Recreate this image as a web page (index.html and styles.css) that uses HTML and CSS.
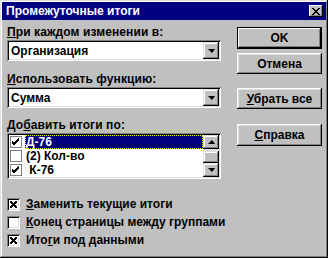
FILE: index.html
```html
<!DOCTYPE html>
<html lang="ru">
<head>
  <meta charset="UTF-8" />
  <title>Промежуточные итоги</title>
  <link rel="stylesheet" href="styles.css">
</head>
<body>

  <div class="window" role="dialog" aria-labelledby="dlgTitle">
    <div class="title-bar">
      <span id="dlgTitle" class="title-text">Промежуточные итоги</span>
      <button class="close-btn" aria-label="Закрыть">
        <svg width="8" height="7" viewBox="0 0 8 7"><path d="M0 0h2v1h1v1h2V1h1V0h2v1H7v1H6v1H5v1h1v1h1v1h1v1H6V6H5V5H3v1H2v1H0V6h1V5h1V4h1V3H2V2H1V1H0z" fill="#000"/></svg>
      </button>
    </div>

    <div class="content">
      <div class="left-col">
        <label class="field-label"><u>П</u>ри каждом изменении в:</label>
        <div class="combo">
          <span class="combo-value">Организация</span>
          <span class="combo-btn"><span class="arrow-down"></span></span>
        </div>

        <label class="field-label second"><u>И</u>спользовать функцию:</label>
        <div class="combo">
          <span class="combo-value">Сумма</span>
          <span class="combo-btn"><span class="arrow-down"></span></span>
        </div>

        <label class="field-label third">До<u>б</u>авить итоги по:</label>
        <div class="listbox">
          <div class="list-items">
            <div class="list-row">
              <span class="list-check checked"></span>
              <span class="list-text selected">Д-76</span>
            </div>
            <div class="list-row">
              <span class="list-check"></span>
              <span class="list-text">(2) Кол-во</span>
            </div>
            <div class="list-row">
              <span class="list-check checked"></span>
              <span class="list-text">&nbsp;К-76</span>
            </div>
          </div>
          <div class="scrollbar">
            <span class="scroll-btn"><span class="arrow-up"></span></span>
            <span class="scroll-track"></span>
            <span class="scroll-thumb"></span>
            <span class="scroll-fill"></span>
            <span class="scroll-btn"><span class="arrow-down"></span></span>
          </div>
        </div>
      </div>

      <div class="right-col">
        <button class="btn default">OK</button>
        <button class="btn cancel">Отмена</button>
        <button class="btn remove"><u>У</u>брать все</button>
        <button class="btn help"><u>С</u>правка</button>
      </div>
    </div>

    <div class="options">
      <div class="option">
        <span class="checkbox crossed"></span>
        <span><u>З</u>аменить текущие итоги</span>
      </div>
      <div class="option">
        <span class="checkbox"></span>
        <span><u>К</u>онец страницы между группами</span>
      </div>
      <div class="option">
        <span class="checkbox crossed"></span>
        <span>Ито<u>г</u>и под данными</span>
      </div>
    </div>
  </div>

</body>
</html>
```

FILE: styles.css
```css
body {
  margin: 0;
  padding: 0;
  background-color: #c0c0c0;
  font-family: 'Liberation Sans', Arial, sans-serif;
  font-size: 11px;
  font-weight: bold;
  color: #000;
}

u {
  text-decoration-thickness: 1px;
  text-underline-offset: 1px;
}

.window {
  width: 328px;
  height: 258px;
  box-sizing: border-box;
  padding: 2px;
  background-color: #c0c0c0;
  box-shadow: inset -1px -1px #000, inset 1px 1px #dfdfdf, inset -2px -2px #808080, inset 2px 2px #fff;
}

.title-bar {
  height: 18px;
  background-color: #000080;
  display: flex;
  align-items: center;
  justify-content: space-between;
  padding: 0 3px 0 4px;
}

.title-text {
  color: #fff;
  font-size: 12px;
}

.close-btn {
  width: 14px;
  height: 12px;
  padding: 0;
  border: none;
  background-color: #c0c0c0;
  display: flex;
  align-items: center;
  justify-content: center;
  box-shadow: inset -1px -1px #000, inset 1px 1px #fff, inset -2px -2px #808080;
}

.content {
  display: flex;
  padding: 5px 0 0 5px;
}

.left-col {
  width: 214px;
  display: flex;
  flex-direction: column;
}

.field-label {
  display: block;
  height: 14px;
  line-height: 14px;
  font-size: 12px;
  letter-spacing: 0.1px;
}
.field-label.second { margin-top: 11px; }
.field-label.third { margin-top: 10px; }

.combo {
  margin-top: 1px;
  height: 21px;
  box-sizing: border-box;
  background-color: #fff;
  display: flex;
  align-items: center;
  padding: 2px;
  box-shadow: inset 1px 1px #808080, inset -1px -1px #fff, inset 2px 2px #000, inset -2px -2px #dfdfdf;
}

.combo-value {
  flex: 1;
  padding-left: 2px;
  font-size: 12px;
}

.combo-btn, .scroll-btn {
  width: 16px;
  height: 17px;
  box-sizing: border-box;
  background-color: #c0c0c0;
  display: flex;
  align-items: center;
  justify-content: center;
  box-shadow: inset -1px -1px #000, inset 1px 1px #dfdfdf, inset -2px -2px #808080, inset 2px 2px #fff;
}

.arrow-down, .arrow-up {
  width: 0;
  height: 0;
  border-left: 4px solid transparent;
  border-right: 3px solid transparent;
}
.arrow-down { border-top: 4px solid #000; }
.arrow-up { border-bottom: 4px solid #000; }

.listbox {
  margin-top: 1px;
  height: 46px;
  box-sizing: border-box;
  padding: 2px;
  background-color: #fff;
  display: flex;
  box-shadow: inset 1px 1px #808080, inset -1px -1px #fff, inset 2px 2px #000, inset -2px -2px #dfdfdf;
}

.list-items {
  flex: 1;
}

.list-row {
  height: 14px;
  display: flex;
  align-items: center;
  font-size: 12px;
}

.list-check {
  width: 12px;
  height: 12px;
  box-sizing: border-box;
  margin: 0 3px 0 1px;
  border: 1px solid #808080;
  background-color: #fff;
}
.list-check.checked {
  background: #fff url("data:image/svg+xml,%3csvg xmlns='http://www.w3.org/2000/svg' width='10' height='10'%3e%3cpath d='M1 4l2 2 5-5M1 5l2 2 5-5M1 6l2 2 5-5' stroke='%23000' fill='none' stroke-width='1'/%3e%3c/svg%3e") no-repeat center;
}

.list-text {
  flex: 1;
  height: 14px;
  line-height: 14px;
  padding-left: 1px;
}
.list-text.selected {
  background-color: #000080;
  color: #fff;
  outline: 1px dotted #ffff00;
  outline-offset: -1px;
}

.scrollbar {
  width: 16px;
  display: flex;
  flex-direction: column;
}
.scrollbar .scroll-btn { height: 14px; }

.scroll-track {
  height: 2px;
  background-image: repeating-conic-gradient(#c0c0c0 0 25%, #fff 0 50%);
  background-size: 2px 2px;
}

.scroll-thumb {
  height: 12px;
  background-color: #c0c0c0;
  box-shadow: inset -1px -1px #000, inset 1px 1px #dfdfdf, inset -2px -2px #808080, inset 2px 2px #fff;
}

.scroll-fill {
  flex: 1;
}

.right-col {
  margin-left: 16px;
  width: 85px;
  display: flex;
  flex-direction: column;
}

.btn {
  height: 21px;
  padding: 0;
  border: none;
  background-color: #c0c0c0;
  font-family: inherit;
  font-size: 12px;
  font-weight: bold;
  color: #000;
  box-shadow: inset -1px -1px #000, inset 1px 1px #fff, inset -2px -2px #808080, inset 2px 2px #dfdfdf;
}
.btn.default {
  height: 22px;
  margin-top: 2px;
  box-shadow: inset 0 0 0 1px #000, inset -2px -2px #000, inset 2px 2px #fff, inset -3px -3px #808080;
}
.btn.cancel { margin-top: 4px; }
.btn.remove { margin-top: 14px; }
.btn.help { margin-top: 15px; height: 22px; }

.options {
  margin-top: 16px;
  padding-left: 5px;
  display: flex;
  flex-direction: column;
}

.option {
  height: 18px;
  display: flex;
  align-items: center;
  font-size: 12px;
}

.checkbox {
  width: 13px;
  height: 13px;
  box-sizing: border-box;
  margin-right: 6px;
  background-color: #fff;
  box-shadow: inset 1px 1px #808080, inset -1px -1px #fff, inset 2px 2px #000, inset -2px -2px #dfdfdf;
}
.checkbox.crossed {
  background: #fff url("data:image/svg+xml,%3csvg xmlns='http://www.w3.org/2000/svg' width='7' height='7'%3e%3cpath d='M0 0L7 7M7 0L0 7M1 0L7 6M0 1L6 7M6 0L0 6M7 1L1 7' stroke='%23000' stroke-width='1' fill='none'/%3e%3c/svg%3e") no-repeat 3px 3px;
}
```
